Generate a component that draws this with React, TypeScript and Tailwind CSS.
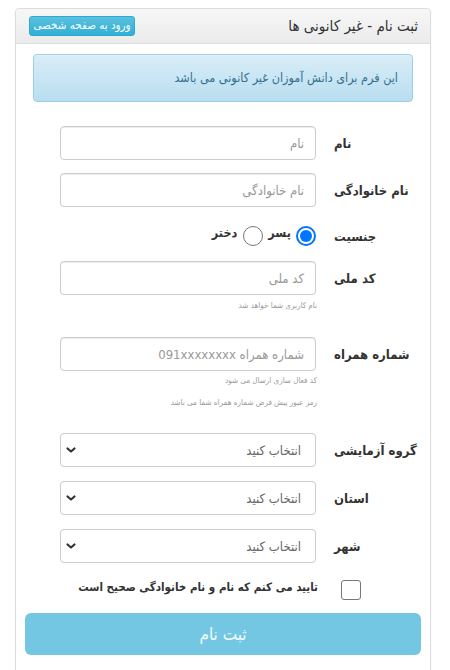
import React from "react";

const font = "font-['DejaVu_Sans_Condensed','DejaVu_Sans',sans-serif]";

function Label({ children }: { children: React.ReactNode }) {
  return (
    <div className="w-[96px] shrink-0 text-left text-[13px] font-bold text-[#333] leading-none">
      {children}
    </div>
  );
}

function TextRow({
  label,
  placeholder,
  big,
}: {
  label: string;
  placeholder: string;
  big?: boolean;
}) {
  return (
    <div className="flex items-center gap-[18px] pl-[44px]">
      <Label>{label}</Label>
      <div className="flex h-[34px] w-[258px] items-center rounded-[4px] border border-[#ccc] bg-white pr-[11px] shadow-[inset_0_1px_1px_rgba(0,0,0,0.075)]">
        <span className={`${big ? "text-[13px]" : "text-[13px]"} text-[#999] leading-none`}>
          {placeholder}
        </span>
      </div>
    </div>
  );
}

function SelectRow({ label }: { label: string }) {
  return (
    <div className="flex items-center gap-[18px] pl-[44px]">
      <Label>{label}</Label>
      <div className="flex h-[34px] w-[258px] items-center justify-between rounded-[4px] border border-[#ccc] bg-white pl-[3px] pr-[14px]">
        <span className="text-[13px] text-[#666] leading-none">انتخاب کنید</span>
        <svg width="14" height="14" viewBox="0 0 14 14" className="mr-[1px]">
          <path d="M3.5 5.5 L7 8.5 L10.5 5.5" fill="none" stroke="#333" strokeWidth="2.2" strokeLinecap="round" strokeLinejoin="round" />
        </svg>
      </div>
    </div>
  );
}

function Help({ children }: { children: React.ReactNode }) {
  return (
    <div className="pr-[113px] text-[8px] leading-[12px] text-[#999]">{children}</div>
  );
}

export default function App() {
  return (
    <div dir="rtl" className={`${font} min-h-[670px] w-[450px] bg-white pt-[8px]`}>
      <div className="mr-[19px] w-[416px] h-[680px] rounded-[4px] border border-[#ddd] bg-white shadow-[0_1px_2px_rgba(0,0,0,0.06)]">
        <div className="flex h-[35px] items-center justify-between rounded-t-[4px] border-b border-[#ddd] bg-[linear-gradient(#f7f7f7,#ebebeb)] pl-[13px] pr-[12px]">
          <div className="text-[15px] text-[#333] leading-none">ثبت نام - غیر کانونی ها</div>
          <div className="flex h-[20px] w-[106px] items-center justify-center rounded-[3px] border border-[#2aabd2] bg-[linear-gradient(#5bc0de,#31b0d5)] text-[11.5px] text-white leading-none">
            ورود به صفحه شخصی
          </div>
        </div>

        <div className="mx-[17px] mt-[10px] flex h-[48px] items-center rounded-[4px] border border-[#9acfea] bg-[linear-gradient(#d9edf7,#b9def0)] pr-[14px] shadow-[inset_0_1px_0_rgba(255,255,255,0.25)]">
          <span className="text-[12.5px] text-[#31708f] leading-none">این فرم برای دانش آموزان غیر کانونی می باشد</span>
        </div>

        <div className="mt-[24px]">
          <TextRow label="نام" placeholder="نام" />
        </div>
        <div className="mt-[13px]">
          <TextRow label="نام خانوادگی" placeholder="نام خانوادگی" />
        </div>

        <div className="mt-[12px] flex h-[34px] items-center gap-[18px] pl-[44px]">
          <Label>جنسیت</Label>
          <div className="flex items-center">
            <span className="flex h-[20px] w-[20px] items-center justify-center rounded-full border-2 border-[#0075ff] bg-white">
              <span className="h-[12px] w-[12px] rounded-full bg-[#0075ff]" />
            </span>
            <span className="mr-[5px] -mt-[5px] text-[12.5px] font-bold text-[#333] leading-none">پسر</span>
            <span className="mr-[5px] h-[20px] w-[20px] rounded-full border border-[#767676] bg-white" />
            <span className="mr-[6px] -mt-[5px] text-[12.5px] font-bold text-[#333] leading-none">دختر</span>
          </div>
        </div>

        <div className="mt-[8px]">
          <TextRow label="کد ملی" placeholder="کد ملی" big />
        </div>
        <div className="mt-[5px]">
          <Help>نام کاربری شما خواهد شد</Help>
        </div>

        <div className="mt-[25px]">
          <TextRow label="شماره همراه" placeholder="شماره همراه 091xxxxxxxx" big />
        </div>
        <div className="mt-[4px]">
          <Help>کد فعال سازی ارسال می شود</Help>
        </div>
        <div className="mt-[10px]">
          <Help>رمز عبور پیش فرض شماره همراه شما می باشد</Help>
        </div>

        <div className="mt-[24px]">
          <SelectRow label="گروه آزمایشی" />
        </div>
        <div className="mt-[14px]">
          <SelectRow label="استان" />
        </div>
        <div className="mt-[14px]">
          <SelectRow label="شهر" />
        </div>

        <div className="mt-[17px] flex items-start pr-[69px]">
          <span className="h-[20px] w-[20px] shrink-0 rounded-[3px] border-[1.5px] border-[#767676] bg-white" />
          <span className="mr-[23px] mt-[1px] text-[11.5px] font-bold text-[#333] leading-[12px]">
            تایید می کنم که نام و نام خانوادگی صحیح است
          </span>
        </div>

        <div className="mx-[9px] mt-[13px] flex h-[42px] items-center justify-center rounded-[6px] bg-[#74c7e2]">
          <span className="text-[17px] text-white/90 leading-none">ثبت نام</span>
        </div>
      </div>
    </div>
  );
}
